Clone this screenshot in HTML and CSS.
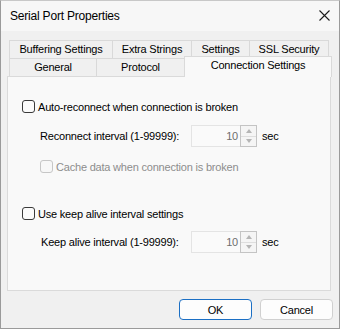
FILE: index.html
```html
<!DOCTYPE html>
<html lang="en">
<head>
  <meta charset="UTF-8">
  <title>Serial Port Properties</title>
  <link rel="stylesheet" href="styles.css">
</head>
<body>
  <div class="window">
    <div class="titlebar">
      <span class="title">Serial Port Properties</span>
      <svg class="close" width="11" height="11" viewBox="0 0 11 11">
        <path d="M0.5 0.5 L10.5 10.5 M10.5 0.5 L0.5 10.5" stroke="#1b1b1b" stroke-width="1.1" fill="none"/>
      </svg>
    </div>
    <div class="dialog">
      <div class="tabs">
        <div class="tab-row back">
          <div class="tab w1">Buffering Settings</div>
          <div class="tab w2">Extra Strings</div>
          <div class="tab w3">Settings</div>
          <div class="tab w4">SSL Security</div>
        </div>
        <div class="tab-row front">
          <div class="tab w5">General</div>
          <div class="tab w6">Protocol</div>
          <div class="tab w7 active">Connection Settings</div>
        </div>
      </div>
      <div class="panel">
        <label class="check">
          <span class="box"></span>
          <span>Auto-reconnect when connection is broken</span>
        </label>
        <div class="field">
          <span class="field-label">Reconnect interval (1-99999):</span>
          <div class="spin">
            <span class="spin-value">10</span>
            <div class="spin-buttons">
              <span class="arrow up"></span>
              <span class="arrow down"></span>
            </div>
          </div>
          <span class="unit">sec</span>
        </div>
        <label class="check sub disabled">
          <span class="box"></span>
          <span>Cache data when connection is broken</span>
        </label>
        <label class="check second">
          <span class="box"></span>
          <span>Use keep alive interval settings</span>
        </label>
        <div class="field">
          <span class="field-label">Keep alive interval (1-99999):</span>
          <div class="spin">
            <span class="spin-value">10</span>
            <div class="spin-buttons">
              <span class="arrow up"></span>
              <span class="arrow down"></span>
            </div>
          </div>
          <span class="unit">sec</span>
        </div>
      </div>
      <div class="buttons">
        <button class="btn default">OK</button>
        <button class="btn">Cancel</button>
      </div>
    </div>
  </div>
</body>
</html>
```

FILE: styles.css
```css
body {
  margin: 0;
  font-family: "Liberation Sans", Arial, sans-serif;
  font-size: 11px;
  letter-spacing: -0.2px;
  color: #000;
}
.window {
  width: 340px;
  height: 329px;
  box-sizing: border-box;
  border: 1px solid #9a9a9a;
  border-top-color: #c8c8c8;
  background-color: #f0f0f0;
  display: flex;
  flex-direction: column;
}
.titlebar {
  height: 30px;
  background-color: #f7f7f7;
  display: flex;
  align-items: center;
  justify-content: space-between;
  padding: 0 9px 0 9px;
}
.title {
  font-size: 12px;
  margin-top: -1px;
}
.close {
  margin-top: -1px;
}
.dialog {
  flex: 1;
  padding: 9px 7px 0 6px;
}
.tabs {
  padding-left: 2px;
}
.tab-row {
  display: flex;
  height: 18px;
}
.tab {
  box-sizing: border-box;
  height: 18px;
  border: 1px solid #d9d9d9;
  border-bottom: none;
  background-color: #f0f0f0;
  text-align: center;
  line-height: 17px;
  margin-left: -1px;
}
.tab:first-child {
  margin-left: 0;
}
.w1 { width: 104px; }
.w2 { width: 80px; }
.w3 { width: 59px; }
.w4 { width: 80px; }
.w5 { width: 88px; }
.w6 { width: 89px; }
.w7 { width: 148px; }
.tab.active {
  position: relative;
  z-index: 1;
  height: 21px;
  margin-top: -2px;
  background-color: #f9f9f9;
  border-color: #dadada;
  line-height: 17px;
}
.panel {
  width: 324px;
  height: 215px;
  box-sizing: border-box;
  border: 1px solid #dadada;
  background-color: #f9f9f9;
  padding: 23px 0 0 14px;
}
.check {
  display: flex;
  align-items: center;
  height: 13px;
  gap: 3px;
}
.box {
  width: 13px;
  height: 13px;
  box-sizing: border-box;
  border: 1px solid #3a3a3a;
  border-radius: 3px;
  background-color: #fbfbfb;
  flex: none;
}
.check.sub {
  margin-left: 18px;
  margin-top: 13px;
}
.check.disabled {
  color: #8d8d8d;
}
.check.disabled .box {
  border-color: #c6c6c6;
  background-color: #f7f7f7;
}
.check.second {
  margin-top: 34px;
}
.field {
  display: flex;
  align-items: center;
  height: 22px;
  margin-left: 18px;
  margin-top: 12px;
}
.check.second + .field {
  margin-top: 11px;
  margin-left: 19px;
}
.field-label {
  width: 151px;
}
.check.second + .field .field-label {
  width: 150px;
}
.spin {
  width: 66px;
  height: 22px;
  box-sizing: border-box;
  border: 1px solid #e4e4e4;
  background-color: #fafafa;
  display: flex;
}
.spin-value {
  flex: 1;
  text-align: right;
  padding-right: 2px;
  line-height: 20px;
  color: #6d6d6d;
}
.spin-buttons {
  width: 17px;
  margin: -1px -1px -1px 0;
  border: 1px solid #c4c4c4;
  box-sizing: border-box;
  display: flex;
  flex-direction: column;
  background-color: #f5f5f5;
}
.arrow {
  flex: 1;
  display: flex;
  align-items: center;
  justify-content: center;
}
.arrow.up {
  border-bottom: 1px solid #dedede;
}
.arrow::before {
  content: "";
  border-left: 3px solid transparent;
  border-right: 3px solid transparent;
}
.arrow.up::before {
  border-bottom: 4px solid #b5b5b5;
}
.arrow.down::before {
  border-top: 4px solid #b5b5b5;
}
.unit {
  margin-left: 5px;
}
.buttons {
  display: flex;
  justify-content: flex-end;
  gap: 8px;
  margin-top: 8px;
  margin-right: -1px;
}
.btn {
  width: 73px;
  height: 21px;
  box-sizing: border-box;
  font-family: "Liberation Sans", Arial, sans-serif;
  font-size: 11px;
  letter-spacing: -0.2px;
  color: #000;
  background-color: #fdfdfd;
  border: 1px solid #d0d0d0;
  border-radius: 4px;
  padding: 0;
}
.btn.default {
  border-color: #1b6fc4;
}
```
